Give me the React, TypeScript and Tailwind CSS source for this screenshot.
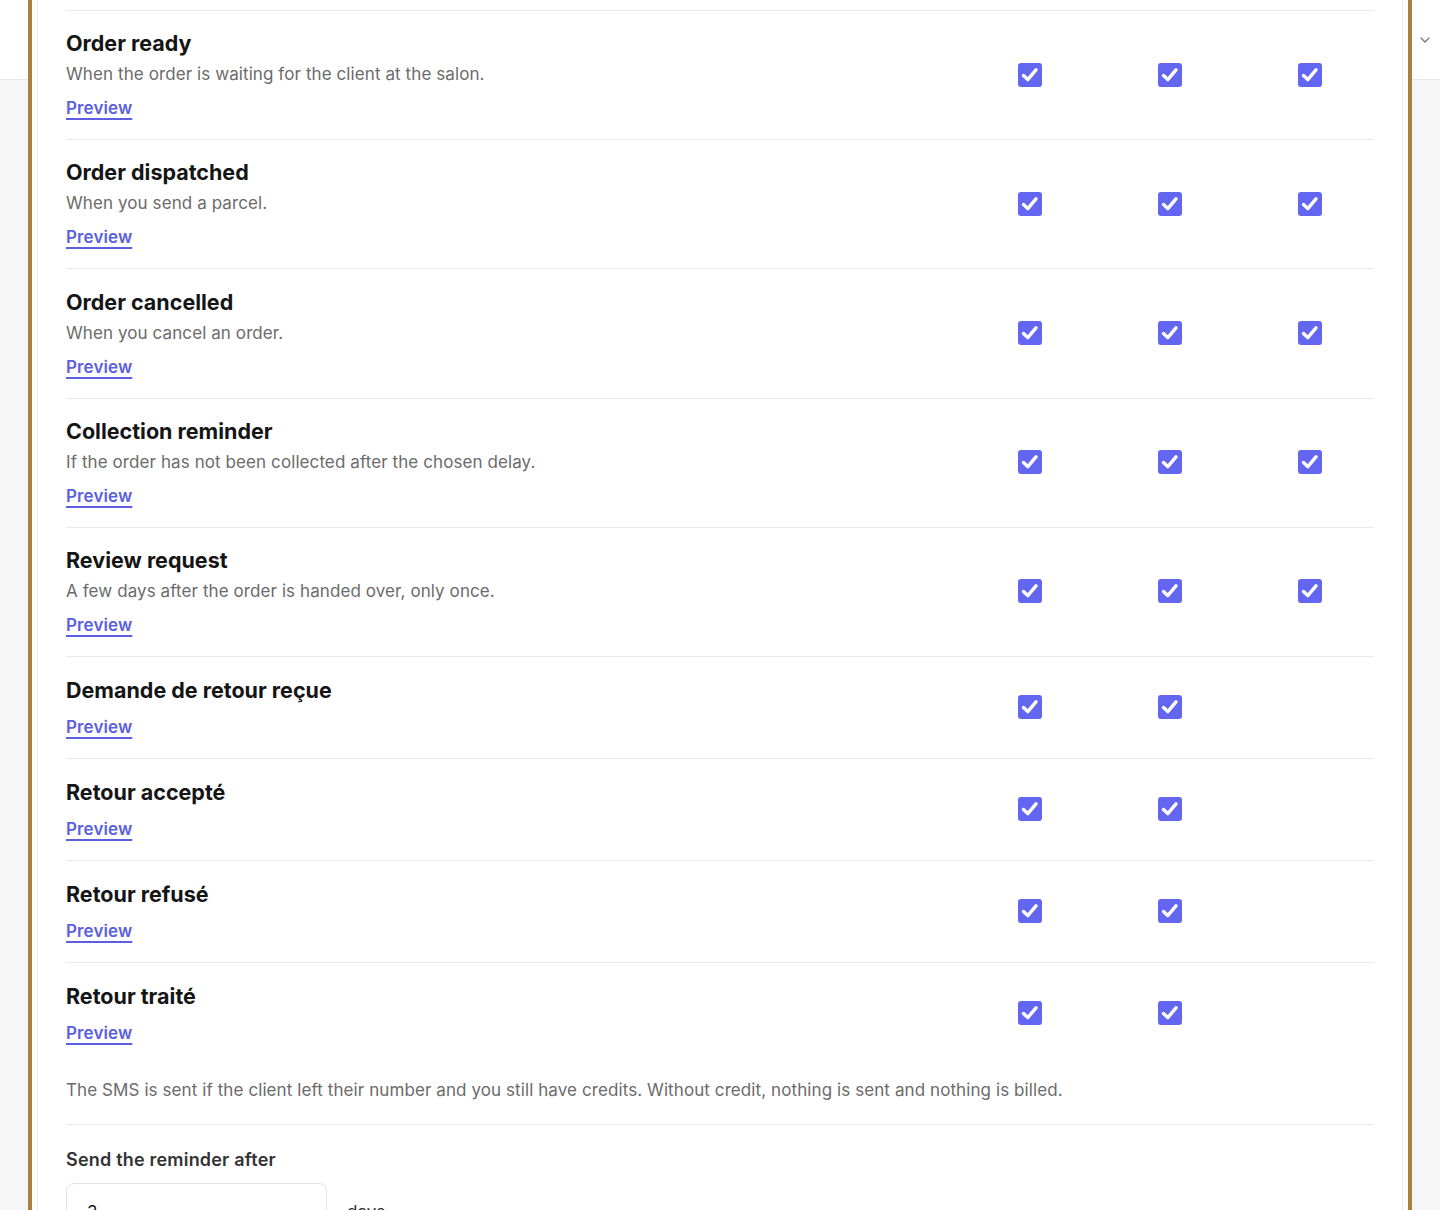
import React from "react";

type Row = { title: string; desc?: string; cols: number };

const rows: Row[] = [
  { title: "Order ready", desc: "When the order is waiting for the client at the salon.", cols: 3 },
  { title: "Order dispatched", desc: "When you send a parcel.", cols: 3 },
  { title: "Order cancelled", desc: "When you cancel an order.", cols: 3 },
  { title: "Collection reminder", desc: "If the order has not been collected after the chosen delay.", cols: 3 },
  { title: "Review request", desc: "A few days after the order is handed over, only once.", cols: 3 },
  { title: "Demande de retour reçue", cols: 2 },
  { title: "Retour accepté", cols: 2 },
  { title: "Retour refusé", cols: 2 },
  { title: "Retour traité", cols: 2 },
];

function Check() {
  return (
    <span className="flex h-6 w-6 items-center justify-center rounded-[3px] bg-[#6366f1]">
      <svg width="24" height="24" viewBox="0 0 24 24" fill="none">
        <path d="M5.5 12.5 L9.8 16.6 L18 6.8" stroke="white" strokeWidth="3.4" strokeLinecap="round" strokeLinejoin="round" />
      </svg>
    </span>
  );
}

export default function App() {
  return (
    <div
      className="flex h-[1210px] w-[1440px] overflow-hidden bg-[#f6f6f6]"
      style={{ fontFamily: "Inter, 'Noto Sans', sans-serif" }}
    >
      <div className="w-[28px] shrink-0">
        <div className="h-[80px] border-b border-[#e6e6e6] bg-white" />
      </div>
      <div className="flex w-[1384px] shrink-0 border-x-4 border-[#a8813e] bg-white px-[5px]">
        <div className="flex-1 border-x border-[#e8e8ec] bg-white px-7 pt-[10px]">
          {rows.map((r) => (
            <div
              key={r.title}
              className={`grid grid-cols-[1fr_128px_128px_128px] items-center gap-x-3 border-t border-[#e8e8e8] ${
                r.desc ? "pt-[18.2px] pb-[19px]" : "pt-[19px] pb-[19px]"
              }`}
            >
              <div className="flex flex-col items-start">
                <div className="text-[21.5px] font-bold leading-[28px] text-[#151515]">{r.title}</div>
                {r.desc && (
                  <div className="mt-[5px] text-[17px] leading-[24px] tracking-[0.09px] text-[#6b6b6b]">{r.desc}</div>
                )}
                <a
                  className={`${r.desc ? "mt-[10px]" : "mt-[11px]"} text-[17px] font-semibold leading-[24px] tracking-[0.1px] text-[#5b5fe0] underline decoration-2 underline-offset-[4px]`}
                >
                  Preview
                </a>
              </div>
              <div className="flex justify-center">
                <Check />
              </div>
              <div className="flex justify-center">
                <Check />
              </div>
              <div className="flex justify-center">{r.cols === 3 ? <Check /> : null}</div>
            </div>
          ))}
          <p className="mt-[14px] pb-[22px] text-[17px] leading-[24px] tracking-[0.09px] text-[#6b6b6b]">
            The SMS is sent if the client left their number and you still have credits. Without credit, nothing is sent and nothing is billed.
          </p>
          <div className="border-t border-[#e8e8e8] pt-[22px]">
            <div className="text-[18px] font-semibold leading-[26px] tracking-[0.2px] text-[#333333]">Send the reminder after</div>
            <div className="mt-[10px] flex items-center gap-5">
              <div className="flex h-[60px] w-[261px] items-center rounded-lg border border-[#e3e3e3] px-[20px] text-[17px] text-[#151515]">
                3
              </div>
              <span className="text-[17px] text-[#333333]">days</span>
            </div>
          </div>
        </div>
      </div>
      <div className="w-[28px] shrink-0">
        <div className="flex h-[80px] items-start justify-center border-b border-[#e6e6e6] bg-white pt-[37px] pr-[2px]">
          <svg width="10" height="6" viewBox="0 0 10 6" fill="none">
            <path d="M1 1 L5 5 L9 1" stroke="#777" strokeWidth="1.3" strokeLinecap="round" strokeLinejoin="round" />
          </svg>
        </div>
      </div>
    </div>
  );
}
